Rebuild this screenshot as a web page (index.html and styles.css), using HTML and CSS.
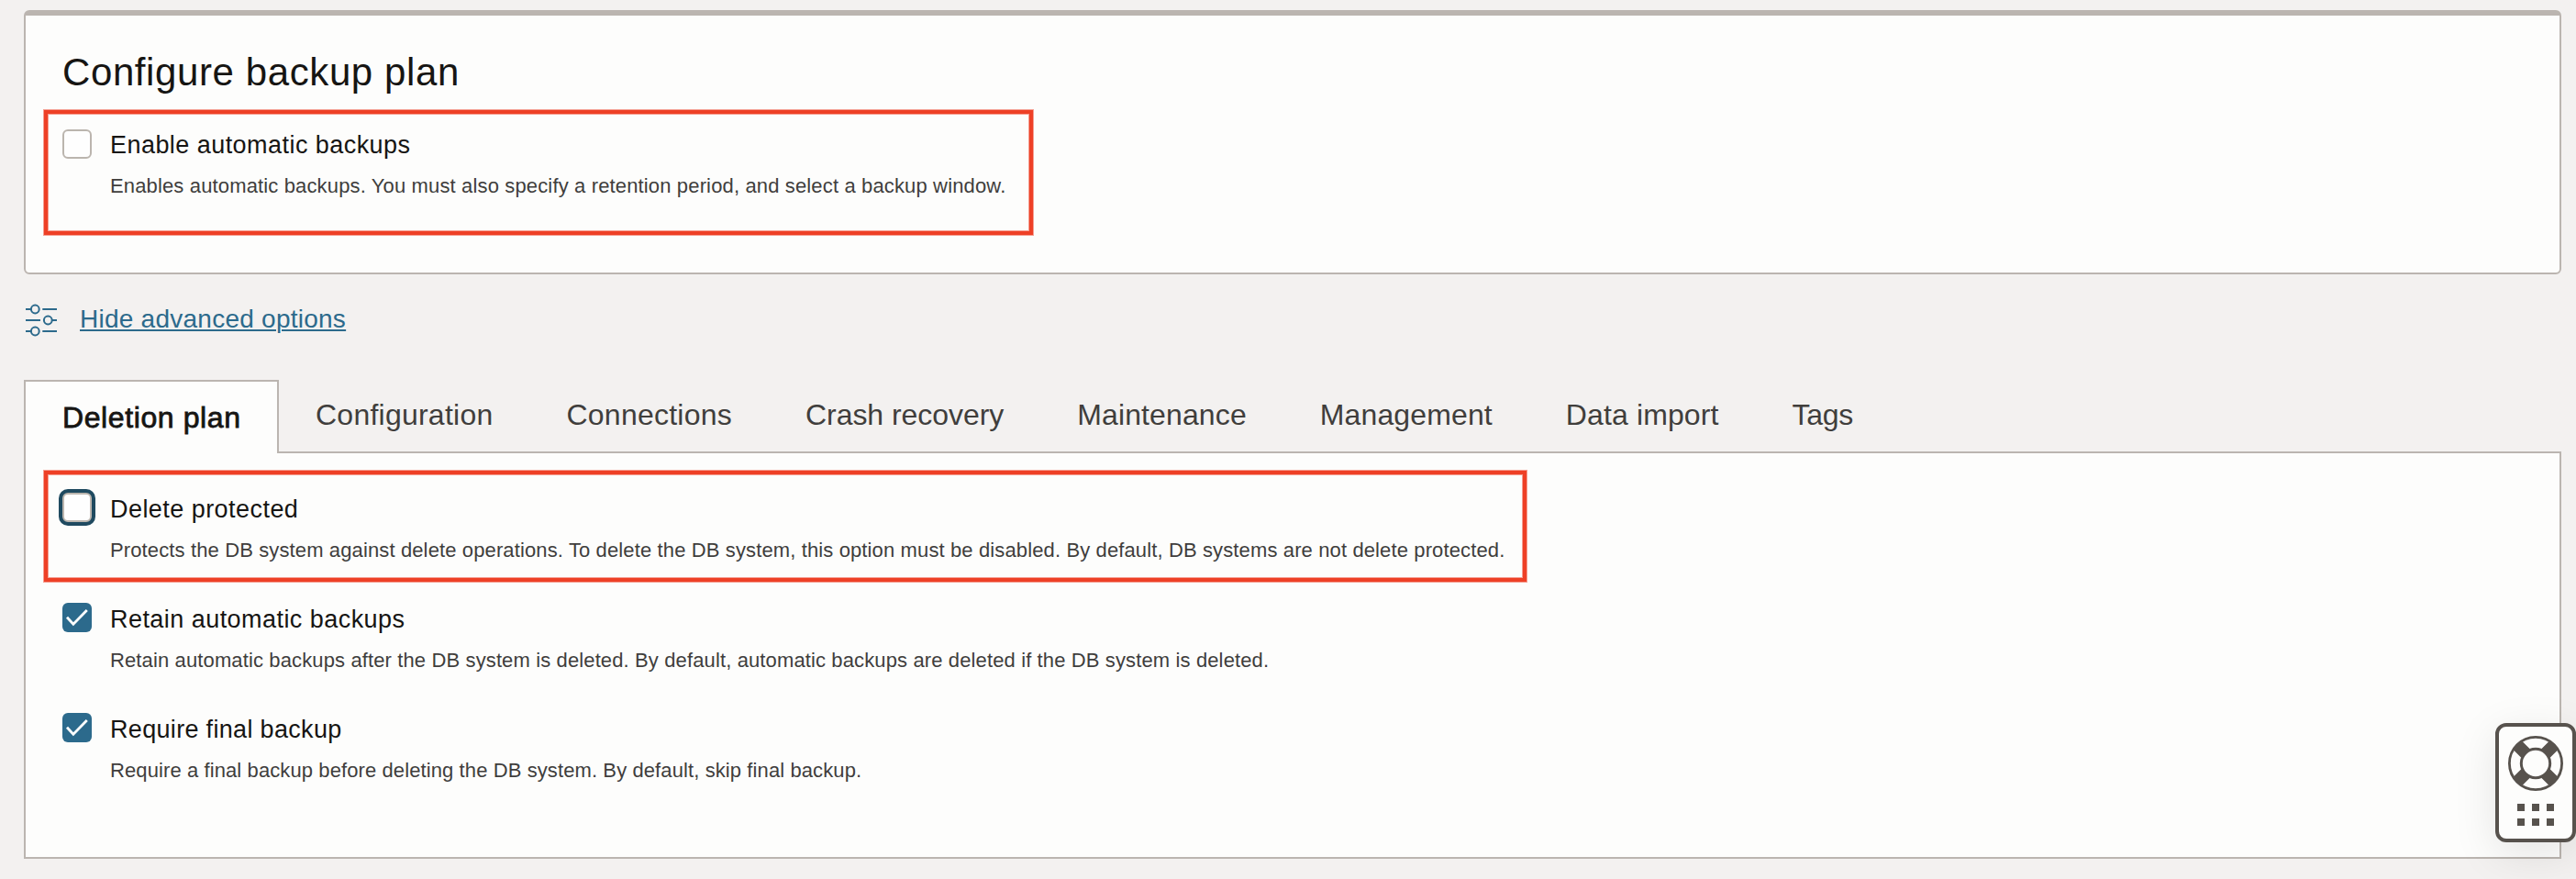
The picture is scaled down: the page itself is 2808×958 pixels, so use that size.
FILE: index.html
```
<!DOCTYPE html>
<html lang="en">
<head>
<meta charset="utf-8">
<title>Configure backup plan</title>
<link rel="stylesheet" href="styles.css">
</head>
<body>
<main class="page">
  <section class="card">
    <h2 class="card-title">Configure backup plan</h2>
    <div class="highlight highlight-backup">
      <div class="option">
        <span class="checkbox" role="checkbox" aria-checked="false"></span>
        <div class="option-text option-text-raised">
          <div class="option-label">Enable automatic backups</div>
          <div class="option-help">Enables automatic backups. You must also specify a retention period, and select a backup window.</div>
        </div>
      </div>
    </div>
  </section>

  <div class="advanced">
    <svg class="advanced-icon" width="34" height="36" viewBox="0 0 34 36" fill="none" stroke="#2c6a8c" stroke-width="2">
      <path d="M0 6h6M18.3 6H34M0 18h16M28.5 18H34M0 30h6M18.3 30H34"/>
      <circle cx="10.3" cy="6" r="4.4"/>
      <circle cx="24.3" cy="18" r="4.4"/>
      <circle cx="10.3" cy="30" r="4.4"/>
    </svg>
    <a class="advanced-link" href="#">Hide advanced options</a>
  </div>

  <nav class="tabs">
    <div class="tab tab-active">Deletion plan</div>
    <div class="tab tab-wide">Configuration</div>
    <div class="tab tab-wide">Connections</div>
    <div class="tab tab-snug">Crash recovery</div>
    <div class="tab tab-mid">Maintenance</div>
    <div class="tab tab-mid">Management</div>
    <div class="tab tab-mid">Data import</div>
    <div class="tab tab-tight">Tags</div>
  </nav>

  <section class="panel">
    <div class="highlight highlight-delete">
      <div class="option">
        <span class="checkbox checkbox-focus" role="checkbox" aria-checked="false"></span>
        <div class="option-text">
          <div class="option-label">Delete protected</div>
          <div class="option-help">Protects the DB system against delete operations. To delete the DB system, this option must be disabled. By default, DB systems are not delete protected.</div>
        </div>
      </div>
    </div>
    <div class="option">
      <span class="checkbox checkbox-checked" role="checkbox" aria-checked="true">
        <svg width="32" height="32" viewBox="0 0 32 32"><path d="M5 15.8l6.9 7.4L26.8 8" fill="none" stroke="#fff" stroke-width="2.8"/></svg>
      </span>
      <div class="option-text">
        <div class="option-label">Retain automatic backups</div>
        <div class="option-help">Retain automatic backups after the DB system is deleted. By default, automatic backups are deleted if the DB system is deleted.</div>
      </div>
    </div>
    <div class="option">
      <span class="checkbox checkbox-checked" role="checkbox" aria-checked="true">
        <svg width="32" height="32" viewBox="0 0 32 32"><path d="M5 15.8l6.9 7.4L26.8 8" fill="none" stroke="#fff" stroke-width="2.8"/></svg>
      </span>
      <div class="option-text option-text-final">
        <div class="option-label">Require final backup</div>
        <div class="option-help">Require a final backup before deleting the DB system. By default, skip final backup.</div>
      </div>
    </div>
  </section>
</main>

<aside class="help">
  <svg width="60" height="60" viewBox="-30 -30 60 60" fill="none" stroke="#57524d">
    <path stroke-width="13.4" d="M11 11l9.3 9.3M-11 11l-9.3 9.3M11-11l9.3-9.3M-11-11l-9.3-9.3"/>
    <circle r="28.6" stroke-width="2.8"/>
    <circle r="15.7" stroke-width="3"/>
  </svg>
  <div class="help-dots"><i></i><i></i><i></i><i></i><i></i><i></i></div>
</aside>
</body>
</html>
```
FILE: styles.css
```
* { box-sizing: border-box; }

body {
  margin: 0;
  height: 958px;
  overflow: hidden;
  background: #f3f1f0;
  color: #161513;
  font-family: "Liberation Sans", Arial, sans-serif;
}

.page { padding: 11px 16px 0 26px; }

.card {
  height: 288px;
  padding: 37px 38px 0 40px;
  border: 2px solid #bbb5b0;
  border-top-width: 6px;
  border-radius: 6px;
  background: #fdfdfc;
}

.card-title {
  margin: 0;
  font-size: 42px;
  font-weight: 400;
  line-height: 49px;
  letter-spacing: 0.6px;
}

.highlight {
  margin-left: -20px;
  border: 4px solid #ee4026;
  box-shadow: 0 0 0 1px rgba(238, 64, 38, .5), inset 0 0 0 1px rgba(238, 64, 38, .5);
}

.highlight-backup {
  width: 1078px;
  height: 136px;
  margin-top: 17px;
  padding: 17px 16px 0;
}

.highlight-delete {
  width: 1616px;
  height: 121px;
  margin-bottom: 23px;
  padding: 20px 16px 0;
}

.option { display: flex; gap: 20px; }
.option + .option { margin-top: 45px; }

.checkbox {
  flex: none;
  width: 32px;
  height: 32px;
  border: 2px solid #bbb5ae;
  border-radius: 6px;
  background: #fefefe;
}
.checkbox-focus { box-shadow: 0 0 0 4px #1f4a60; }
.checkbox-checked { border: 0; background: #2c6a8c; }
.checkbox-checked svg { display: block; }

.option-text { padding-top: 2px; white-space: nowrap; }
.option-text-raised { padding-top: 1px; }

.option-label {
  font-size: 27px;
  line-height: 32px;
  letter-spacing: 0.45px;
}
.option-help {
  margin-top: 16px;
  font-size: 22px;
  line-height: 25px;
  letter-spacing: 0.125px;
  color: #403e3c;
}
.option-text-raised .option-help { letter-spacing: 0.145px; }
.option-text-final .option-label { letter-spacing: 0.32px; }
.option-text-final .option-help { letter-spacing: 0.1px; }

.advanced {
  display: flex;
  gap: 25px;
  height: 36px;
  margin-top: 32px;
  padding-left: 2px;
}
.advanced-link {
  padding-top: 1px;
  font-size: 28px;
  line-height: 31px;
  letter-spacing: 0.25px;
  color: #2c6a8c;
  text-decoration: underline;
  text-decoration-thickness: 2px;
  text-underline-offset: 2px;
}

.tabs {
  display: flex;
  height: 78px;
  margin-top: 47px;
  font-size: 32px;
  line-height: 36px;
  color: #403e3c;
  white-space: nowrap;
}
.tab { padding: 20px 40px 0; }
.tab-wide { letter-spacing: 0.24px; }
.tab-snug { letter-spacing: -0.05px; }
.tab-mid { letter-spacing: 0.12px; }
.tab-tight { letter-spacing: -0.3px; }
.tab-active {
  position: relative;
  z-index: 1;
  width: 278px;
  height: 80px;
  padding: 21px 0 0 40px;
  border: 2px solid #bbb5b0;
  border-bottom: 0;
  background: #fdfdfc;
  color: #161513;
  letter-spacing: 0.6px;
  -webkit-text-stroke: 0.8px #161513;
}

.panel {
  height: 444px;
  padding: 19px 38px 0 40px;
  border: 2px solid #bbb5b0;
  background: #fdfdfc;
}

.help {
  position: absolute;
  top: 788px;
  right: 0;
  z-index: 2;
  display: flex;
  flex-direction: column;
  align-items: center;
  gap: 14px;
  width: 88px;
  height: 130px;
  padding-top: 10px;
  border: 4px solid #57524d;
  border-radius: 12px;
  background: #fdfdfc;
  box-shadow: 0 12px 48px rgba(0, 0, 0, .1);
}
.help svg { display: block; }
.help-dots {
  display: grid;
  grid-template-columns: repeat(3, 8px);
  gap: 8px;
}
.help-dots i { height: 8px; background: #57524d; }
```
